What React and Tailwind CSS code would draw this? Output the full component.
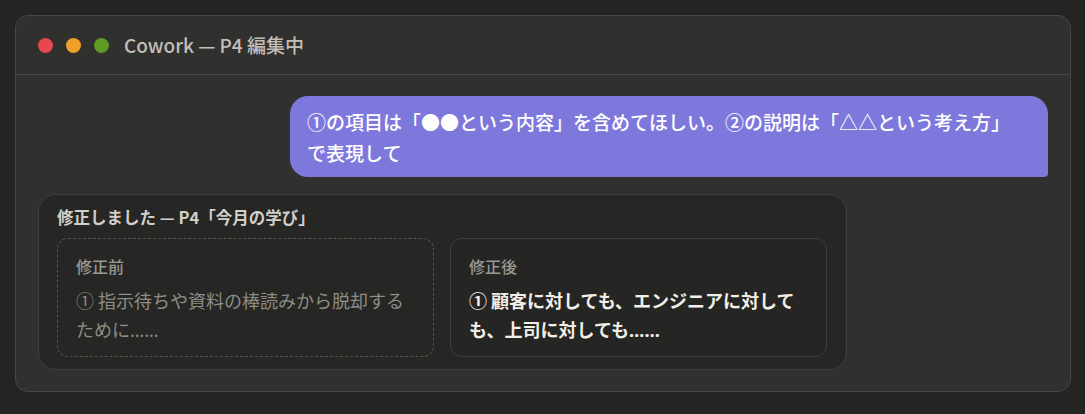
export default function App() {
  const latin = { fontFamily: '"Noto Sans", sans-serif' };
  return (
    <div
      className="min-h-screen w-full bg-[#242423] p-[15px] pr-[14px]"
      style={{ fontFamily: '"Noto Sans CJK JP", "Noto Sans", sans-serif' }}
    >
      <div className="h-[377px] overflow-hidden rounded-[13px] border border-[#474745] bg-[#30302e]">
        {/* title bar */}
        <div className="flex h-[59px] items-center border-b border-[#474745] pl-[22px]">
          <div className="flex items-center gap-[13px]">
            <span className="h-[15px] w-[15px] rounded-full bg-[#e5484d]" />
            <span className="h-[15px] w-[15px] rounded-full bg-[#f0a02a]" />
            <span className="h-[15px] w-[15px] rounded-full bg-[#5d9a26]" />
          </div>
          <span className="ml-[15px] text-[19px] font-medium text-[#c2bfb8]">
            Cowork — P4 編集中
          </span>
        </div>

        {/* conversation */}
        <div className="flex flex-col px-[22px] pt-[21px]">
          <div className="ml-auto w-[758px] rounded-[18px] rounded-br-[4px] bg-[#7f78dc] pb-[9px] pl-[17px] pr-[28px] pt-[10px] text-[19px] font-medium leading-[31px] text-white">
            ①の項目は「●●という内容」を含めてほしい。②の説明は「△△という考え方」で表現して
          </div>

          <div className="mt-[17px] w-[809px] rounded-[18px] border border-[#3f3f3d] bg-[#262624] px-[18px] pb-[12px] pt-[11px]">
            <div className="text-[16.5px] font-bold leading-[22px] text-[#d2cfc8]">
              修正しました — P4「今月の学び」
            </div>
            <div className="mt-[10px] flex gap-[16px]">
              <div className="w-[377px] rounded-[11px] border border-dashed border-[#55554f] px-[18px] pb-[11px] pt-[16px]">
                <div className="text-[16px] font-medium leading-[22px] text-[#9a9893]">修正前</div>
                <div className="mt-[9px] text-[18px] leading-[29px] text-[#8e8c87]">
                  ① 指示待ちや資料の棒読みから脱却するために<span style={latin}>……</span>
                </div>
              </div>
              <div className="w-[377px] rounded-[11px] border border-[#3e3e3c] bg-[#252523] px-[18px] pb-[11px] pt-[16px]">
                <div className="text-[16px] font-medium leading-[22px] text-[#9a9893]">修正後</div>
                <div className="mt-[9px] text-[18px] font-bold leading-[29px] text-[#f2efe8]">
                  ① 顧客に対しても、エンジニアに対しても、上司に対しても<span style={latin}>……</span>
                </div>
              </div>
            </div>
          </div>
        </div>
      </div>
    </div>
  );
}
